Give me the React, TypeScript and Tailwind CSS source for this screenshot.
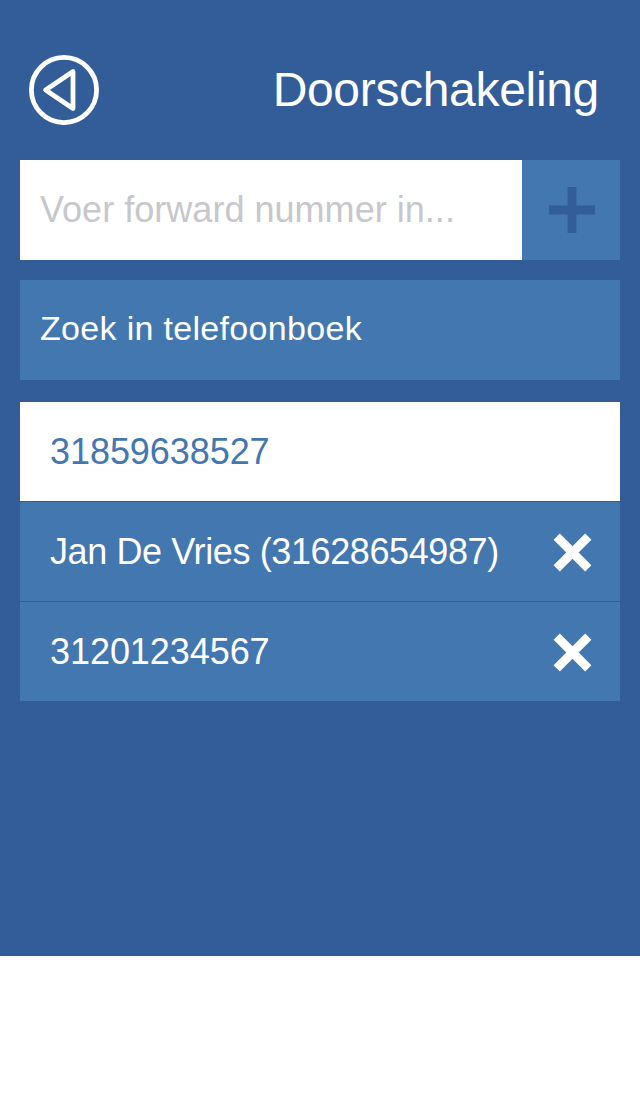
import { useState } from 'react'

type Forward = {
  label: string
  active?: boolean
}

const initialForwards: Forward[] = [
  { label: '31859638527', active: true },
  { label: 'Jan De Vries (31628654987)' },
  { label: '31201234567' },
]

function BackIcon() {
  return (
    <svg width="70" height="70" viewBox="0 0 70 70" fill="none" stroke="white" strokeWidth="4.8" strokeLinejoin="round">
      <circle cx="35" cy="35" r="32.6" />
      <path d="M16.6 35 44 16.5V53.5Z" strokeWidth="4.8" />
    </svg>
  )
}

function PlusIcon() {
  return (
    <svg width="46" height="46" viewBox="0 0 46 46" fill="none" stroke="#325d98" strokeWidth="9">
      <path d="M23 0V46M0 23H46" />
    </svg>
  )
}

function RemoveIcon() {
  return (
    <svg width="39" height="39" viewBox="0 0 39 39" fill="none" stroke="white" strokeWidth="8.8">
      <path d="M3.7 3.7 35.3 35.3M35.3 3.7 3.7 35.3" />
    </svg>
  )
}

export default function App() {
  const [number, setNumber] = useState('')
  const [forwards, setForwards] = useState(initialForwards)

  const addForward = () => {
    if (!number.trim()) return
    setForwards([...forwards, { label: number.trim() }])
    setNumber('')
  }

  return (
    <div className="min-h-[1096px] bg-white font-['Liberation_Sans',Arial,sans-serif]">
      <main className="h-[956px] bg-[#325d98] px-5 text-white">
        <header className="flex h-40 items-center justify-between pt-5 pr-[21px] pl-[9px]">
          <button type="button" aria-label="Terug">
            <BackIcon />
          </button>
          <h1 className="text-[48px] leading-none tracking-[-0.32px]">Doorschakeling</h1>
        </header>

        <div className="flex h-[100px]">
          <input
            value={number}
            onChange={e => setNumber(e.target.value)}
            placeholder="Voer forward nummer in..."
            className="min-w-0 flex-1 bg-white px-5 text-[36px] tracking-[0.03px] text-[#4377b0] outline-none placeholder:text-[#c7c7cd]"
          />
          <button
            type="button"
            aria-label="Toevoegen"
            onClick={addForward}
            className="flex w-[98px] items-center justify-center bg-[#4377b0] pl-0.5"
          >
            <PlusIcon />
          </button>
        </div>

        <button
          type="button"
          className="mt-5 flex h-[100px] w-full items-center bg-[#4377b0] px-5 pb-1 text-[34px] tracking-[0.32px]"
        >
          Zoek in telefoonboek
        </button>

        <ul className="mt-[22px] flex flex-col gap-px">
          {forwards.map(forward => (
            <li
              key={forward.label}
              className={
                forward.active
                  ? 'flex h-[99px] items-center justify-between bg-white pr-7 pl-[30px] text-[#4377b0]'
                  : 'flex h-[99px] items-center justify-between bg-[#4377b0] pr-7 pl-[30px]'
              }
            >
              <span
                className={
                  /[a-z]/i.test(forward.label)
                    ? 'text-[36px] leading-none tracking-[-0.39px]'
                    : 'text-[36px] leading-none tracking-[-0.06px]'
                }
              >
                {forward.label}
              </span>
              {!forward.active && (
                <button
                  type="button"
                  aria-label="Verwijderen"
                  className="pt-px"
                  onClick={() => setForwards(forwards.filter(f => f !== forward))}
                >
                  <RemoveIcon />
                </button>
              )}
            </li>
          ))}
        </ul>
      </main>
    </div>
  )
}
